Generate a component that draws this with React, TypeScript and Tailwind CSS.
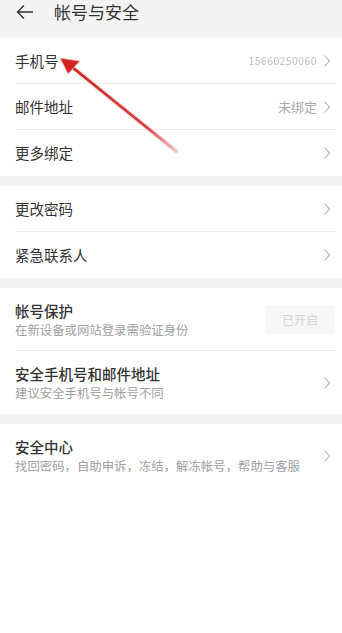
import React from "react";

const font = { fontFamily: '"Noto Sans CJK SC", "Noto Sans", sans-serif' };

function Chevron() {
  return (
    <svg width="8" height="14" viewBox="0 0 8 14" className="shrink-0">
      <path d="M1.5 1.5 L6.5 7 L1.5 12.5" fill="none" stroke="#b0b0b0" strokeWidth="1.1" />
    </svg>
  );
}

function Row({ title, value, blur, last }: { title: string; value?: string; blur?: boolean; last?: boolean }) {
  return (
    <div className="relative flex h-[46px] items-center pl-[15px] pr-[11px]">
      <span className="flex-1 text-[14.5px] text-[#333]">{title}</span>
      {value && (
        <span
          className={
            blur
              ? "mr-[6px] text-[10.5px] tracking-[0.4px] text-[#bdbdbd] blur-[0.6px]"
              : "mr-[6px] text-[13px] text-[#a8a8a8]"
          }
        >
          {value}
        </span>
      )}
      <Chevron />
      {!last && <div className="absolute bottom-0 left-[15px] right-[5px] h-px bg-[#ececec]" />}
    </div>
  );
}

function TwoLine({
  title,
  sub,
  right,
  last,
}: {
  title: string;
  sub: string;
  right: React.ReactNode;
  last?: boolean;
}) {
  return (
    <div className="relative flex h-[63px] items-center pl-[15px] pr-[11px]">
      <div className="flex flex-1 flex-col">
        <span className="text-[14.5px] font-medium leading-[20px] text-[#333]">{title}</span>
        <span className="text-[12.4px] leading-[18px] text-[#a0a0a0]">{sub}</span>
      </div>
      {right}
      {!last && <div className="absolute bottom-0 left-[15px] right-[5px] h-px bg-[#ececec]" />}
    </div>
  );
}

function Gap() {
  return <div className="h-[10px] bg-[#f1f1f1]" />;
}

export default function App() {
  return (
    <div className="relative flex min-h-[633px] w-[342px] flex-col bg-white" style={font}>
      <header className="flex h-[38px] items-start bg-[#f3f3f3] pl-[15px]">
        <svg width="20" height="20" viewBox="0 0 20 20" className="mt-[2px]">
          <path d="M18 10 H3 M9 3.5 L2.5 10 L9 16.5" fill="none" stroke="#333" strokeWidth="1.4" />
        </svg>
        <span className="ml-[19px] text-[17px] leading-[24px] text-[#333]">帐号与安全</span>
      </header>

      <Row title="手机号" value="15660250060" blur />
      <Row title="邮件地址" value="未绑定" />
      <Row title="更多绑定" last />
      <Gap />
      <Row title="更改密码" />
      <Row title="紧急联系人" last />
      <Gap />
      <TwoLine
        title="帐号保护"
        sub="在新设备或网站登录需验证身份"
        right={
          <span className="mr-[-4px] flex h-[29px] w-[70px] items-center justify-center rounded-[4px] bg-[#f7f7f7] text-[12px] text-[#d2d2d2]">
            已开启
          </span>
        }
      />
      <TwoLine title="安全手机号和邮件地址" sub="建议安全手机号与帐号不同" right={<Chevron />} last />
      <Gap />
      <TwoLine title="安全中心" sub="找回密码，自助申诉，冻结，解冻帐号，帮助与客服" right={<Chevron />} last />
      <div className="flex-1 bg-white" />

      <svg className="pointer-events-none absolute left-0 top-0" width="342" height="200" viewBox="0 0 342 200">
        <defs>
          <linearGradient id="ar" x1="175" y1="150" x2="62" y2="60" gradientUnits="userSpaceOnUse">
            <stop offset="0" stopColor="#ecc0c0" />
            <stop offset="0.25" stopColor="#d84040" />
            <stop offset="1" stopColor="#d01f1f" />
          </linearGradient>
        </defs>
        <line x1="176" y1="151" x2="72" y2="67" stroke="#f2d0d0" strokeWidth="5" strokeLinecap="round" opacity="0.6" />
        <line x1="176" y1="151" x2="72" y2="67" stroke="url(#ar)" strokeWidth="2.8" strokeLinecap="round" />
        <polygon points="60,58 80,61 68,74" fill="#d42222" stroke="#f0c8c8" strokeWidth="0.8" />
      </svg>
    </div>
  );
}
